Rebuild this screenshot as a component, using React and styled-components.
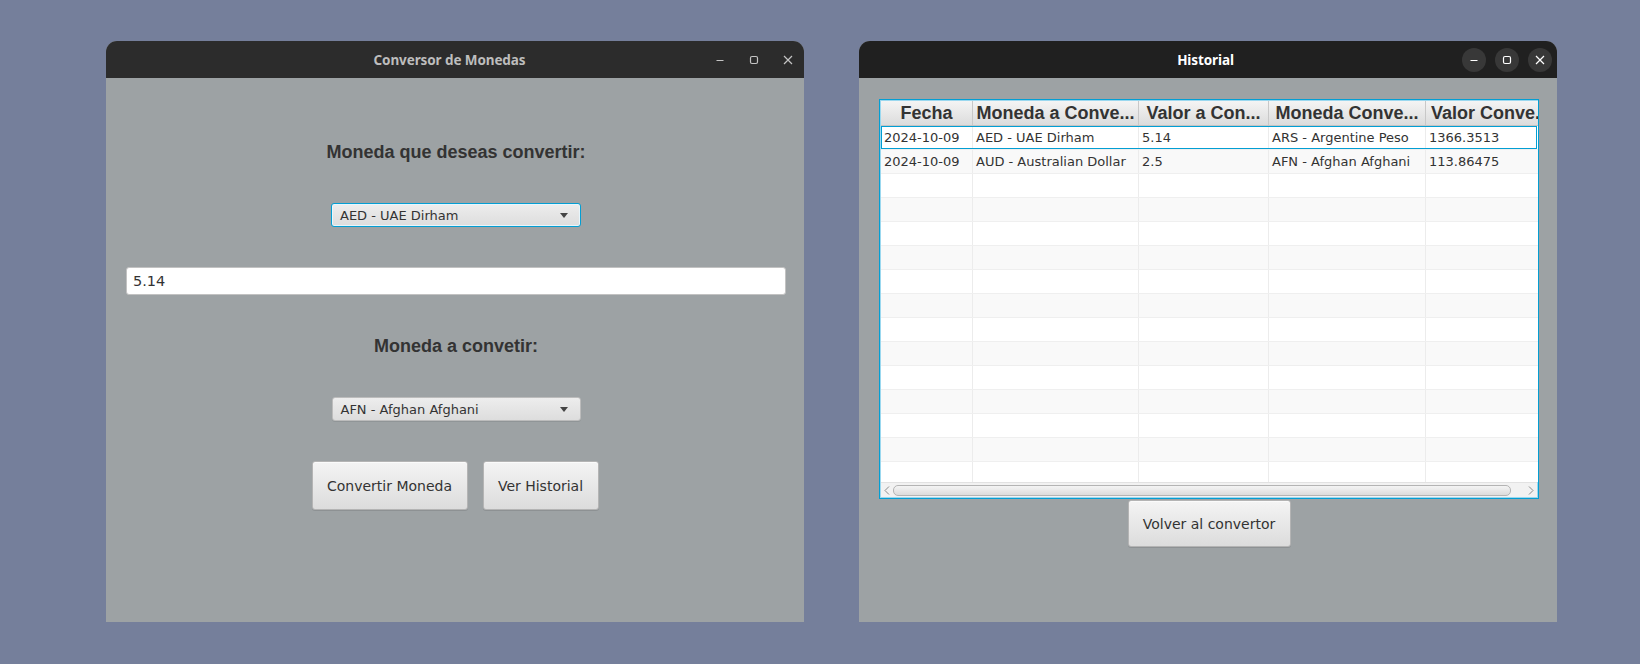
import React from "react";
import styled, { createGlobalStyle, css } from "styled-components";

const Global = createGlobalStyle`
  html, body { margin: 0; padding: 0; }
  body {
    background: #757f9b;
    width: 1640px;
    height: 664px;
    overflow: hidden;
    font-family: "DejaVu Sans", "Liberation Sans", sans-serif;
  }
`;

const Desktop = styled.div`
  display: flex;
  gap: 55px;
  padding: 41px 0 0 106px;
`;

const Window = styled.div`
  width: 698px;
  height: 581px;
  display: flex;
  flex-direction: column;
  background: #9da2a4;
  border-radius: 11px 11px 0 0;
  overflow: hidden;
`;

const TitleBar = styled.div`
  height: 37px;
  flex: none;
  display: grid;
  grid-template-columns: 1fr auto 1fr;
  align-items: center;
  background: ${(p) => (p.$focused ? "#202020" : "#2c2c2c")};
  padding-right: ${(p) => (p.$focused ? "5px" : "11px")};
`;

const Title = styled.div`
  grid-column: 2;
  font-family: "Noto Sans", "Open Sans", sans-serif;
  font-weight: 700;
  font-size: 13.5px;
  letter-spacing: -0.1px;
  color: ${(p) => (p.$focused ? "#ffffff" : "#bdbdbd")};
`;

const Controls = styled.div`
  grid-column: 3;
  justify-self: end;
  display: flex;
  align-items: center;
  gap: ${(p) => (p.$focused ? "9px" : "24px")};
`;

const CtrlBtn = styled.div`
  display: flex;
  align-items: center;
  justify-content: center;
  ${(p) =>
    p.$focused
      ? css`
          width: 24px;
          height: 24px;
          border-radius: 50%;
          background: #383838;
          color: #ffffff;
        `
      : css`
          width: 10px;
          height: 10px;
          color: #c4c4c4;
        `}
`;

const MinIcon = () => (
  <svg width="10" height="10" viewBox="0 0 10 10">
    <path d="M1.5 5.5h7" stroke="currentColor" strokeWidth="1.2" fill="none" />
  </svg>
);
const MaxIcon = () => (
  <svg width="10" height="10" viewBox="0 0 10 10">
    <rect x="1.5" y="1.5" width="7" height="7" rx="1.5" stroke="currentColor" strokeWidth="1.2" fill="none" />
  </svg>
);
const CloseIcon = () => (
  <svg width="10" height="10" viewBox="0 0 10 10">
    <path d="M1 1l8 8M9 1l-8 8" stroke="currentColor" strokeWidth="1.2" fill="none" />
  </svg>
);

const WindowControls = ({ focused }) => (
  <Controls $focused={focused}>
    <CtrlBtn $focused={focused}><MinIcon /></CtrlBtn>
    <CtrlBtn $focused={focused}><MaxIcon /></CtrlBtn>
    <CtrlBtn $focused={focused}><CloseIcon /></CtrlBtn>
  </Controls>
);

/* ---------- converter window ---------- */

const ConverterBody = styled.div`
  flex: 1;
  display: flex;
  flex-direction: column;
  align-items: center;
  gap: 40px;
  padding: 63px 18px 0 20px;
`;

const Label = styled.div`
  font-family: "Liberation Sans", Arial, sans-serif;
  font-weight: 700;
  font-size: 18px;
  line-height: 22px;
  color: #333333;
`;

const Combo = styled.div`
  box-sizing: border-box;
  width: ${(p) => p.$width}px;
  height: 24px;
  display: flex;
  align-items: center;
  justify-content: space-between;
  padding: 0 12px 0 8px;
  border-radius: 3px;
  font-size: 13px;
  color: #333333;
  background: linear-gradient(#ededed, #dddddd);
  border: 1px solid ${(p) => (p.$focused ? "#039ed3" : "#bcbcbc")};
  box-shadow: ${(p) =>
    p.$focused ? "inset 0 0 0 1px #e8f6fc" : "0 1px 0 rgba(0,0,0,0.08)"};
`;

const Arrow = styled.span`
  width: 0;
  height: 0;
  border-left: 4.5px solid transparent;
  border-right: 4.5px solid transparent;
  border-top: 5px solid #444444;
`;

const TextField = styled.div`
  box-sizing: border-box;
  align-self: stretch;
  height: 28px;
  display: flex;
  align-items: center;
  padding: 0 6px;
  background: #ffffff;
  border: 1px solid #c2c2c2;
  border-radius: 3px;
  font-size: 14.5px;
  color: #333333;
`;

const ButtonRow = styled.div`
  display: flex;
  gap: 15px;
  margin-left: -2px;
`;

const Button = styled.div`
  box-sizing: border-box;
  width: ${(p) => p.$width}px;
  height: ${(p) => p.$height || 49}px;
  display: flex;
  align-items: center;
  justify-content: center;
  font-size: 14px;
  color: #333333;
  background: linear-gradient(#f4f4f4, #dcdcdc);
  border: 1px solid #b4b4b4;
  border-radius: 3px;
  box-shadow: inset 0 1px 0 #fbfbfb, 0 1px 0 rgba(0, 0, 0, 0.1);
`;

/* ---------- history window ---------- */

const HistoryBody = styled.div`
  flex: 1;
  display: flex;
  flex-direction: column;
  align-items: center;
  gap: 1px;
  padding: 21px 18px 0 20px;
`;

const Table = styled.div`
  box-sizing: border-box;
  align-self: stretch;
  height: 400px;
  display: flex;
  flex-direction: column;
  border: 1px solid #039ed3;
  box-shadow: inset 0 0 0 1px #9bd8ef;
  background: #ffffff;
  overflow: hidden;
`;

const COLS = "92px 166px 130px 157px 130px";

const HeaderRow = styled.div`
  flex: none;
  display: grid;
  grid-template-columns: ${COLS};
  height: 24px;
  margin: 1px 0 0 1px;
  background: linear-gradient(#f4f4f4, #dcdcdc);
  border-bottom: 1px solid #c4c4c4;
`;

const HeaderCell = styled.div`
  display: flex;
  align-items: center;
  justify-content: center;
  white-space: nowrap;
  overflow: hidden;
  border-right: 1px solid #c8c8c8;
  font-family: "Liberation Sans", Arial, sans-serif;
  font-weight: 700;
  font-size: 18px;
  color: #333333;
`;

const Rows = styled.div`
  flex: 1;
  overflow: hidden;
  margin-left: 1px;
`;

const Row = styled.div`
  position: relative;
  display: grid;
  grid-template-columns: ${COLS};
  height: 24px;
  box-sizing: border-box;
  border-bottom: 1px solid #efefef;
  background: ${(p) => (p.$odd ? "#f9f9f9" : "#ffffff")};
  ${(p) =>
    p.$focused &&
    css`
      &::after {
        content: "";
        position: absolute;
        inset: 0 1px 0 0;
        border: 1px solid #039ed3;
        pointer-events: none;
      }
    `}
`;

const Cell = styled.div`
  display: flex;
  align-items: center;
  padding-left: 3px;
  white-space: nowrap;
  overflow: hidden;
  border-right: 1px solid #ececec;
  font-size: 13px;
  color: #333333;
`;

const ScrollBar = styled.div`
  flex: none;
  height: 14px;
  margin: 0 1px 1px 1px;
  display: flex;
  align-items: center;
  background: #f2f2f2;
  border-top: 1px solid #e2e2e2;
`;

const ScrollArrow = styled.div`
  width: 12px;
  display: flex;
  justify-content: center;
  align-items: center;
  color: #8a8a8a;
`;

const Track = styled.div`
  flex: 1;
  display: flex;
  align-items: center;
  padding: 0 14px 0 0;
`;

const Thumb = styled.div`
  flex: 1;
  height: 9px;
  border-radius: 5px;
  border: 1px solid #b4b4b4;
  background: linear-gradient(#f4f4f4, #dcdcdc);
`;

const LeftChevron = () => (
  <svg width="6" height="9" viewBox="0 0 6 9">
    <path d="M5 0.5L1 4.5l4 4" stroke="currentColor" strokeWidth="1" fill="none" />
  </svg>
);
const RightChevron = () => (
  <svg width="6" height="9" viewBox="0 0 6 9">
    <path d="M1 0.5l4 4-4 4" stroke="currentColor" strokeWidth="1" fill="none" />
  </svg>
);

const headers = ["Fecha", "Moneda a Conve...", "Valor a Con...", "Moneda Conve...", "Valor Conve..."];
const data = [
  ["2024-10-09", "AED - UAE Dirham", "5.14", "ARS - Argentine Peso", "1366.3513"],
  ["2024-10-09", "AUD - Australian Dollar", "2.5", "AFN - Afghan Afghani", "113.86475"],
];
const rows = Array.from({ length: 16 }, (_, i) => data[i] || ["", "", "", "", ""]);

export default function App() {
  return (
    <>
      <Global />
      <Desktop>
        <Window>
          <TitleBar>
            <Title>Conversor de Monedas</Title>
            <WindowControls focused={false} />
          </TitleBar>
          <ConverterBody>
            <Label>Moneda que deseas convertir:</Label>
            <Combo $width={250} $focused>
              <span>AED - UAE Dirham</span>
              <Arrow />
            </Combo>
            <TextField>5.14</TextField>
            <Label>Moneda a convetir:</Label>
            <Combo $width={249}>
              <span>AFN - Afghan Afghani</span>
              <Arrow />
            </Combo>
            <ButtonRow>
              <Button $width={156}>Convertir Moneda</Button>
              <Button $width={116}>Ver Historial</Button>
            </ButtonRow>
          </ConverterBody>
        </Window>

        <Window>
          <TitleBar $focused>
            <Title $focused>Historial</Title>
            <WindowControls focused />
          </TitleBar>
          <HistoryBody>
            <Table>
              <HeaderRow>
                {headers.map((h) => (
                  <HeaderCell key={h}>{h}</HeaderCell>
                ))}
              </HeaderRow>
              <Rows>
                {rows.map((r, i) => (
                  <Row key={i} $odd={i % 2 === 1} $focused={i === 0}>
                    {r.map((c, j) => (
                      <Cell key={j}>{c}</Cell>
                    ))}
                  </Row>
                ))}
              </Rows>
              <ScrollBar>
                <ScrollArrow><LeftChevron /></ScrollArrow>
                <Track><Thumb /></Track>
                <ScrollArrow><RightChevron /></ScrollArrow>
              </ScrollBar>
            </Table>
            <Button $width={163} $height={47}>Volver al convertor</Button>
          </HistoryBody>
        </Window>
      </Desktop>
    </>
  );
}
